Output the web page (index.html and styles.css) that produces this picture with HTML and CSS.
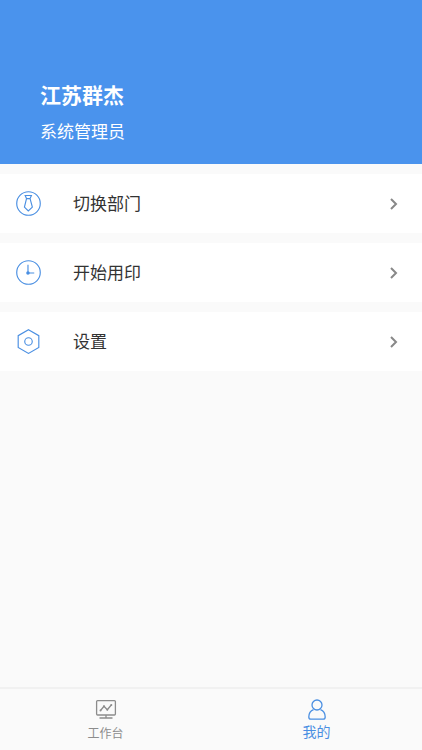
FILE: index.html
```html
<!DOCTYPE html>
<html lang="zh-CN">
<head>
    <meta charset="UTF-8">
    <meta name="viewport" content="width=device-width, initial-scale=1.0">
    <title>我的</title>
    <link rel="stylesheet" href="styles.css">
</head>
<body>
    <header class="header">
        <h1 class="name">江苏群杰</h1>
        <p class="role">系统管理员</p>
    </header>

    <main class="menu">
        <button class="menu-item" type="button">
            <svg class="menu-icon" viewBox="0 0 24 24">
                <circle cx="12" cy="12" r="11.3"/>
                <path d="M8.800 4.300h6l-1.300 3 2.200 8.200-3.900 3.700-3.700-3.700 2-8.200zM10.100 7.300h3.400"/>
            </svg>
            <span class="menu-text">切换部门</span>
            <svg class="arrow" viewBox="0 0 8 12"><path d="M1 1l5 5-5 5"/></svg>
        </button>
        <button class="menu-item" type="button">
            <svg class="menu-icon" viewBox="0 0 24 24">
                <circle cx="12" cy="12" r="11.3"/>
                <path d="M11.500 4.500v8h6"/>
                <circle class="dot" cx="11.500" cy="12.500" r="1.700"/>
            </svg>
            <span class="menu-text">开始用印</span>
            <svg class="arrow" viewBox="0 0 8 12"><path d="M1 1l5 5-5 5"/></svg>
        </button>
        <button class="menu-item" type="button">
            <svg class="menu-icon" viewBox="0 0 24 24">
                <path d="M12 .7l9.900 5.700v11.300L12 23.400l-9.900-5.700V6.400z"/>
                <circle cx="12" cy="12" r="3.600"/>
            </svg>
            <span class="menu-text">设置</span>
            <svg class="arrow" viewBox="0 0 8 12"><path d="M1 1l5 5-5 5"/></svg>
        </button>
    </main>

    <nav class="tabbar">
        <a class="tab" href="#">
            <svg class="tab-icon" viewBox="0 0 22 22">
                <rect x="1.600" y="1.600" width="18.800" height="14.400" rx="1"/>
                <path d="M11 16v3M4.500 19h13M5.500 11.500l3.500-4.200 3.300 3.400 4-4.700"/>
                <circle class="dot" cx="5.500" cy="11.500" r="1"/>
                <circle class="dot" cx="9" cy="7.300" r="1"/>
                <circle class="dot" cx="12.300" cy="10.700" r="1"/>
                <circle class="dot" cx="16.300" cy="6" r="1"/>
            </svg>
            <span>工作台</span>
        </a>
        <a class="tab active" href="#">
            <svg class="tab-icon" viewBox="0 0 22 22">
                <circle cx="11" cy="6" r="5"/>
                <path d="M7.500 10.700C4.500 12 2.800 15 2.800 18q0 2.200 2.200 2.200h12q2.200 0 2.200-2.200c0-3-1.700-6-4.700-7.300"/>
            </svg>
            <span>我的</span>
        </a>
    </nav>
</body>
</html>
```
FILE: styles.css
```css
* {
    box-sizing: border-box;
}
body {
    margin: 0;
    min-height: 100vh;
    display: flex;
    flex-direction: column;
    background-color: #fafafa;
    font-family: "Noto Sans CJK SC", sans-serif;
    color: #333;
}
.header {
    padding: 78px 40px 21px;
    background-color: #4a93ed;
    color: #fff;
}
.name {
    margin: 0 0 9px;
    font-size: 21px;
    line-height: 32px;
    font-weight: bold;
}
.role {
    margin: 0;
    font-size: 17px;
    line-height: 24px;
}
.menu {
    flex: 1;
    display: flex;
    flex-direction: column;
    gap: 10px;
    padding: 10px 0;
}
.menu-item {
    display: flex;
    align-items: center;
    width: 100%;
    height: 59px;
    padding: 0 24px 0 16px;
    border: none;
    background-color: #fff;
    color: #333;
    font-family: inherit;
    font-size: 17px;
    line-height: 24px;
    text-align: left;
    cursor: pointer;
}
.menu-icon {
    width: 25px;
    height: 25px;
    margin-right: 32px;
    fill: none;
    stroke: #4a8fe2;
    stroke-width: 1.1;
}
.dot {
    fill: currentColor;
    stroke: none;
}
.menu-icon .dot {
    fill: #4a8fe2;
}
.menu-text {
    flex: 1;
    padding-bottom: 2px;
}
.arrow {
    width: 8px;
    height: 12px;
    fill: none;
    stroke: #888;
    stroke-width: 2;
}
.tabbar {
    display: flex;
    height: 63px;
    border-top: 2px solid #f1f1f1;
}
.tab {
    flex: 1;
    display: flex;
    flex-direction: column;
    align-items: center;
    padding-top: 10px;
    color: #8c8c8c;
    font-size: 12px;
    line-height: 24px;
    text-decoration: none;
}
.tab-icon {
    width: 22px;
    height: 22px;
    fill: none;
    stroke: currentColor;
    stroke-width: 1.3;
}
.tab.active {
    color: #4a8fe2;
    font-size: 14px;
    line-height: 20px;
}
```
